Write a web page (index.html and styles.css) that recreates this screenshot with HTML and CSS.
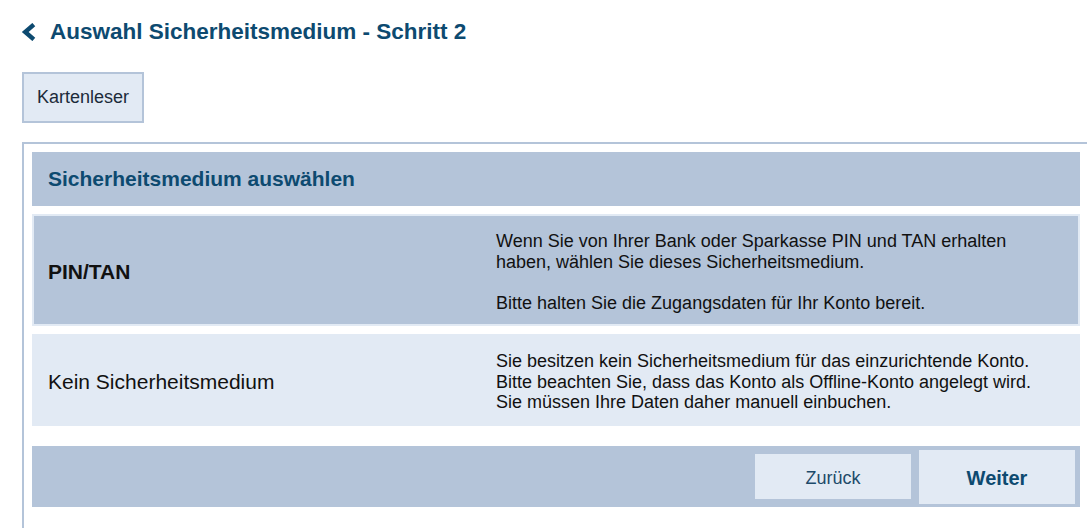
FILE: index.html
```html
<!DOCTYPE html>
<html lang="de">
<head>
  <meta charset="UTF-8" />
  <meta name="viewport" content="width=device-width, initial-scale=1" />
  <title>Auswahl Sicherheitsmedium - Schritt 2</title>
  <link rel="stylesheet" href="styles.css">
</head>
<body>
  <header class="page-title">
    <button class="back-btn" aria-label="Zurück">
      <svg width="15" height="18" viewBox="0 0 15 18">
        <path d="M12.8 1.6 L4.2 9 L12.8 16.4" fill="none" stroke="#0d4a70" stroke-width="4.4" />
      </svg>
    </button>
    <h1>Auswahl Sicherheitsmedium - Schritt 2</h1>
  </header>

  <div class="tabs">
    <button class="tab">Kartenleser</button>
  </div>

  <section class="panel">
    <div class="panel-head">Sicherheitsmedium auswählen</div>

    <div class="option selected">
      <div class="option-name">PIN/TAN</div>
      <div class="option-text">
        <p>Wenn Sie von Ihrer Bank oder Sparkasse PIN und TAN erhalten haben, wählen Sie dieses Sicherheitsmedium.</p>
        <p class="gap">Bitte halten Sie die Zugangsdaten für Ihr Konto bereit.</p>
      </div>
    </div>

    <div class="option">
      <div class="option-name">Kein Sicherheitsmedium</div>
      <div class="option-text">
        <p>Sie besitzen kein Sicherheitsmedium für das einzurichtende Konto.<br>
        Bitte beachten Sie, dass das Konto als Offline-Konto angelegt wird.<br>
        Sie müssen Ihre Daten daher manuell einbuchen.</p>
      </div>
    </div>

    <div class="actions">
      <button class="btn">Zurück</button>
      <button class="btn primary">Weiter</button>
    </div>
  </section>
</body>
</html>
```

FILE: styles.css
```css
* {
  box-sizing: border-box;
}
html, body {
  overflow: hidden;
}
body {
  margin: 0;
  padding: 18px 0 0 21px;
  font-family: "Liberation Sans", Arial, sans-serif;
  background: #fff;
  color: #111;
}

.page-title {
  display: flex;
  align-items: center;
  height: 28px;
}
.back-btn {
  background: none;
  border: none;
  padding: 0;
  margin: 0 14px 0 0;
  width: 15px;
  height: 18px;
  cursor: pointer;
  display: flex;
}
.page-title h1 {
  margin: 0;
  font-size: 22.5px;
  line-height: 28px;
  font-weight: bold;
  color: #0d4a70;
}

.tabs {
  display: flex;
  margin-top: 26px;
  margin-left: 1px;
}
.tab {
  font-family: inherit;
  font-size: 18px;
  line-height: 21px;
  padding: 13px 13px;
  background: #e2eaf4;
  border: 2px solid #b4c4d9;
  color: #1c2b3a;
  cursor: pointer;
}

.panel {
  margin-top: 19px;
  margin-left: 1px;
  margin-right: -3px;
  border: 2px solid #b4c4d9;
  padding: 8px 8px 30px;
  display: flex;
  flex-direction: column;
  gap: 8px;
}

.panel-head {
  background: #b4c4d9;
  color: #0d4a70;
  font-weight: bold;
  font-size: 21px;
  height: 54px;
  display: flex;
  align-items: center;
  padding: 0 16px;
}

.option {
  display: grid;
  grid-template-columns: 448px 1fr;
  align-items: center;
  background: #e2eaf4;
  border: 2px solid #e2eaf4;
  padding: 15px 24px 11px 14px;
  cursor: pointer;
}
.option.selected {
  background: #b4c4d9;
}
.option-name {
  font-size: 21px;
}
.option.selected .option-name {
  font-weight: bold;
}
.option-text {
  font-size: 18px;
  line-height: 20.5px;
}
.option-text p {
  margin: 0;
}
.option-text p.gap {
  margin-top: 20.5px;
}

.actions {
  margin-top: 12px;
  background: #b4c4d9;
  display: flex;
  justify-content: flex-end;
  align-items: center;
  gap: 8px;
  padding: 4px 5px 3px;
}
.btn {
  font-family: inherit;
  width: 156px;
  height: 45px;
  padding: 3px 0 0;
  border: none;
  background: #e2eaf4;
  color: #1d4a6a;
  font-size: 18px;
  cursor: pointer;
}
.btn.primary {
  height: 54px;
  font-size: 20px;
  font-weight: bold;
  color: #0d4a70;
}
```
